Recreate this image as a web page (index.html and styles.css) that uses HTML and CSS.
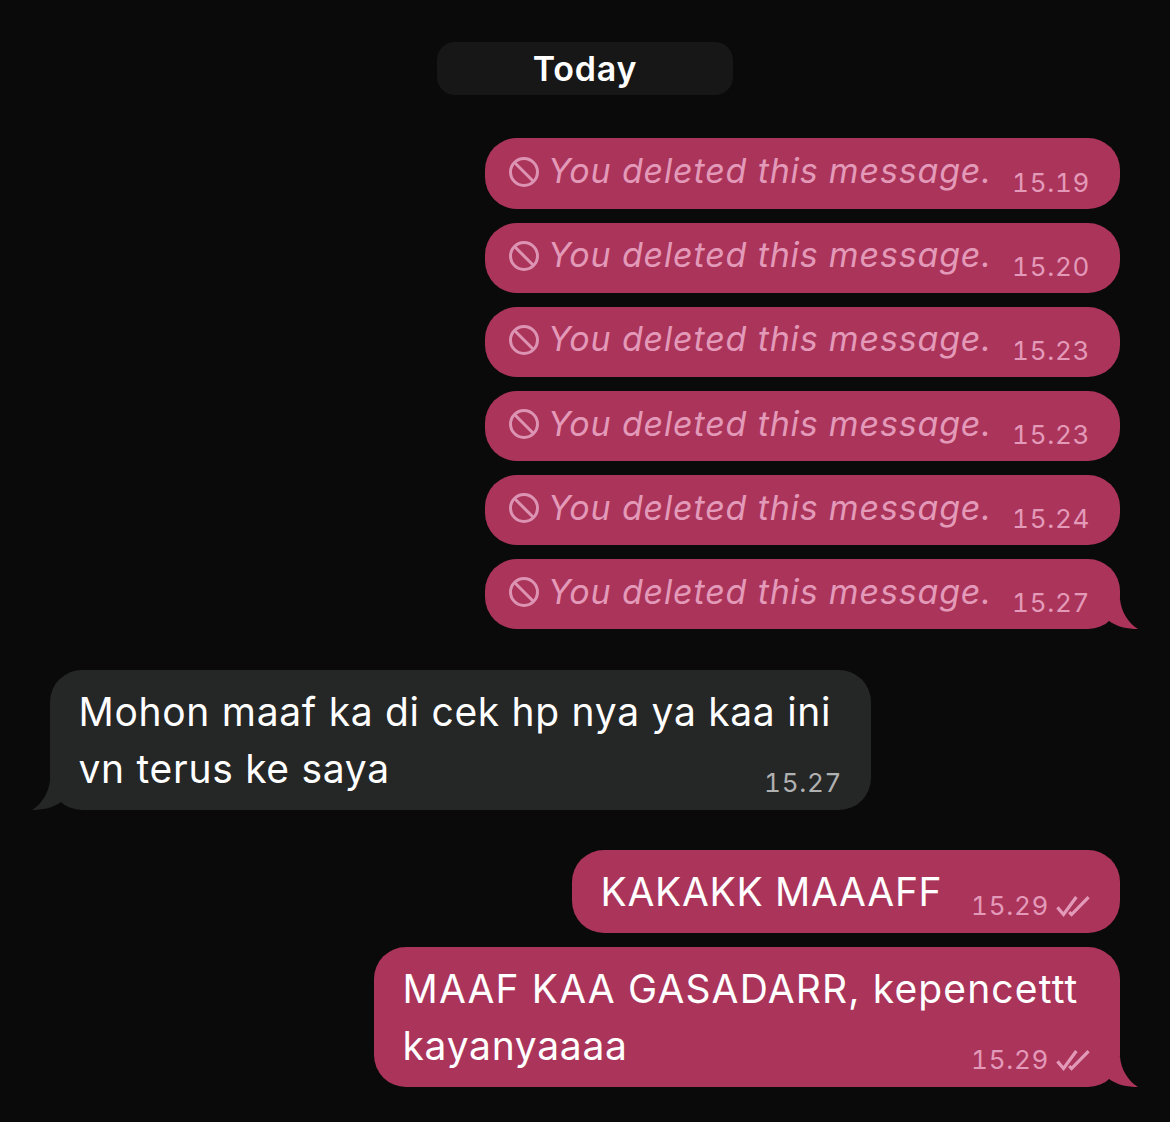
FILE: index.html
```html
<!DOCTYPE html>
<html lang="en">
<head>
    <meta charset="UTF-8">
    <meta name="viewport" content="width=device-width, initial-scale=1.0">
    <title>Chat</title>
    <link rel="stylesheet" href="styles.css">
</head>
<body>
    <svg class="defs" width="0" height="0" aria-hidden="true">
        <symbol id="ban" viewBox="0 0 30 30">
            <circle cx="15" cy="15" r="13.5" fill="none" stroke="currentColor" stroke-width="3"/>
            <path d="M5.5 5.5 24.5 24.5" fill="none" stroke="currentColor" stroke-width="3"/>
        </symbol>
        <symbol id="ticks" viewBox="0 0 36 24">
            <path d="M1.5 13.5 8 21 21.5 2.5M14 18.5 16.5 21 34.5 2.5" fill="none" stroke="currentColor" stroke-width="3.4"/>
        </symbol>
        <symbol id="tail-out" viewBox="0 0 40 50">
            <path d="M0 20H22C23 32 30 44 40 50C30 50 18 48 10 41L0 30Z" fill="currentColor"/>
        </symbol>
        <symbol id="tail-in" viewBox="0 0 40 50">
            <path d="M40 20H18C17 32 10 44 0 50C10 50 22 48 30 41L40 30Z" fill="currentColor"/>
        </symbol>
    </svg>

    <main class="chat">
        <div class="day">Today</div>

        <div class="msgs first">
            <div class="bubble out deleted">
                <svg class="ban"><use href="#ban"/></svg>
                <span class="del-text">You deleted this message.</span>
                <span class="time">15.19</span>
            </div>
            <div class="bubble out deleted">
                <svg class="ban"><use href="#ban"/></svg>
                <span class="del-text">You deleted this message.</span>
                <span class="time">15.20</span>
            </div>
            <div class="bubble out deleted">
                <svg class="ban"><use href="#ban"/></svg>
                <span class="del-text">You deleted this message.</span>
                <span class="time">15.23</span>
            </div>
            <div class="bubble out deleted">
                <svg class="ban"><use href="#ban"/></svg>
                <span class="del-text">You deleted this message.</span>
                <span class="time">15.23</span>
            </div>
            <div class="bubble out deleted">
                <svg class="ban"><use href="#ban"/></svg>
                <span class="del-text">You deleted this message.</span>
                <span class="time">15.24</span>
            </div>
            <div class="bubble out deleted has-tail">
                <svg class="ban"><use href="#ban"/></svg>
                <span class="del-text">You deleted this message.</span>
                <span class="time">15.27</span>
                <svg class="tail tail-right"><use href="#tail-out"/></svg>
            </div>
        </div>

        <div class="msgs">
            <div class="bubble in text">
                <p>Mohon maaf ka di cek hp nya ya kaa ini<br>vn terus ke saya</p>
                <div class="meta"><span class="time">15.27</span></div>
                <svg class="tail tail-left"><use href="#tail-in"/></svg>
            </div>
        </div>

        <div class="msgs">
            <div class="bubble out short">
                <p>KAKAKK MAAAFF</p>
                <div class="meta">
                    <span class="time">15.29</span>
                    <svg class="ticks"><use href="#ticks"/></svg>
                </div>
            </div>
            <div class="bubble out text">
                <p><span class="wide">MAAF KAA GASADARR, kepencettt</span><br>kayanyaaaa</p>
                <div class="meta">
                    <span class="time">15.29</span>
                    <svg class="ticks"><use href="#ticks"/></svg>
                </div>
                <svg class="tail tail-right"><use href="#tail-out"/></svg>
            </div>
        </div>
    </main>
</body>
</html>
```

FILE: styles.css
```css
body {
    margin: 0;
    background-color: #0a0a0b;
    font-family: Inter, "Liberation Sans", sans-serif;
    color: #fff;
}
.defs {
    display: block;
    height: 0;
}
.chat {
    display: flex;
    flex-direction: column;
    padding: 42px 50px 34px;
    gap: 40.3px;
}
.day {
    align-self: center;
    width: 296px;
    height: 53px;
    line-height: 53px;
    margin-bottom: 3.2px;
    text-align: center;
    background-color: #171717;
    border-radius: 18px;
    font-size: 34px;
    font-weight: 600;
    letter-spacing: 0.8px;
}
.msgs {
    display: flex;
    flex-direction: column;
    gap: 14px;
}
.first {
    gap: 13.6px;
}
.bubble {
    position: relative;
    box-sizing: border-box;
    border-radius: 32px;
}
.bubble p {
    margin: 0;
    font-size: 39px;
    line-height: 57px;
    letter-spacing: 0.7px;
    white-space: nowrap;
}
.bubble .wide {
    letter-spacing: 1.15px;
}
.out {
    align-self: flex-end;
    background-color: #ab345b;
    color: #ab345b;
}
.out p {
    color: #fff;
}
.in {
    align-self: flex-start;
    background-color: #252626;
    color: #252626;
}
.in p {
    color: #fff;
}
.deleted {
    display: flex;
    align-items: center;
    width: 635px;
    height: 70.5px;
    padding-left: 24px;
    padding-bottom: 4px;
}
.ban {
    width: 30px;
    height: 30px;
    flex: none;
    color: #dd93b2;
}
.del-text {
    margin-left: 9px;
    margin-bottom: 2px;
    font-size: 34px;
    font-style: italic;
    letter-spacing: 0.84px;
    color: #e39ab9;
    white-space: nowrap;
}
.time {
    font-size: 26px;
    font-variant-numeric: tabular-nums;
    letter-spacing: 0.7px;
    color: #e39ab9;
}
.in .time {
    color: #b0b1b1;
}
.deleted .time {
    position: absolute;
    right: 30px;
    bottom: 11px;
}
.text {
    padding: 13px 0 13px 28.5px;
    height: 140px;
}
.in.text {
    width: 821px;
}
.out.text {
    width: 746px;
}
.meta {
    position: absolute;
    right: 30px;
    bottom: 12px;
    display: flex;
    align-items: center;
    gap: 7px;
}
.in .meta {
    right: 29px;
}
.short {
    height: 83px;
    width: 548px;
    padding: 13px 28.5px;
}
.ticks {
    width: 34px;
    height: 24px;
    color: #e39ab9;
}
.tail {
    position: absolute;
    bottom: 0;
    width: 40px;
    height: 50px;
}
.tail-right {
    right: -18px;
}
.tail-left {
    left: -18px;
}
```
